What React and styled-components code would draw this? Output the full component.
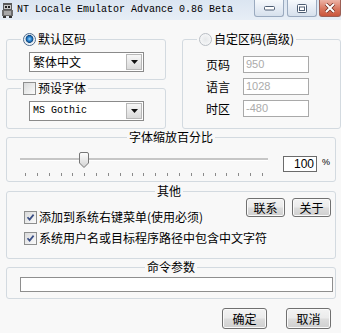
import React from "react";
import styled, { createGlobalStyle } from "styled-components";

const GlobalStyle = createGlobalStyle`
  * { box-sizing: border-box; }
  html, body {
    margin: 0;
    padding: 0;
    background: #f8f8f8;
  }
  body {
    font-family: "Noto Sans CJK SC", "Liberation Sans", sans-serif;
    font-size: 12px;
    line-height: 14px;
    color: #000;
  }
`;

const Window = styled.div`
  width: 341px;
  height: 333px;
  overflow: hidden;
  display: flex;
  flex-direction: column;
  background: #f8f8f8;
`;

const TitleBar = styled.div`
  height: 20px;
  flex: none;
  display: flex;
  align-items: flex-start;
  background: linear-gradient(#dbe5f1, #e7eef6);
`;

const AppIcon = styled.svg`
  width: 16px;
  height: 16px;
  margin-top: 2px;
  flex: none;
`;

const TitleText = styled.span`
  margin-left: 1px;
  font-family: "Liberation Mono", monospace;
  font-size: 10px;
  line-height: 20px;
  white-space: nowrap;
`;

const CaptionButtons = styled.div`
  margin-left: auto;
  display: flex;
`;

const CaptionButton = styled.div`
  width: ${(p) => p.$w}px;
  height: 17px;
  margin-left: ${(p) => p.$gap || 0}px;
  border: 1px solid ${(p) => (p.$close ? "#9c5f55" : "#9aaabf")};
  border-top: none;
  border-radius: 0 0 3px 3px;
  background: ${(p) =>
    p.$close
      ? "linear-gradient(#ecb3a6, #d9775f 55%, #c9553c)"
      : "linear-gradient(#f6f9fc, #e4ebf4 55%, #d6e0ec)"};
  display: flex;
  align-items: center;
  justify-content: center;
`;

const Body = styled.div`
  flex: 1;
  padding: 12px 0 0 6px;
  display: flex;
  flex-direction: column;
`;

const TopRow = styled.div`
  display: flex;
  gap: 16px;
`;

const Column = styled.div`
  display: flex;
  flex-direction: column;
`;

const Group = styled.fieldset`
  margin: ${(p) => p.$mt || 0}px 0 0 0;
  padding: ${(p) => p.$pad};
  width: ${(p) => p.$w}px;
  border: 1px solid #d3dae0;
  border-radius: 3px;
  min-width: 0;
`;

const Legend = styled.legend`
  padding: 0 2px;
  margin-left: ${(p) => (p.$center ? "auto" : `${p.$indent || 0}px`)};
  margin-right: ${(p) => (p.$center ? "auto" : "0")};
  height: 14px;
  line-height: 14px;
  display: flex;
  align-items: center;
  gap: 2px;
  white-space: nowrap;
`;

const Radio = styled.span`
  width: 13px;
  height: 13px;
  flex: none;
  border-radius: 50%;
  border: 1px solid ${(p) => (p.$checked ? "#4d6a8c" : "#b9bec4")};
  background: ${(p) =>
    p.$checked
      ? "radial-gradient(circle at 50% 45%, #9fd3f7 0, #2b86d2 2px, #0f467f 3.6px, #d9e2ea 4.2px, #ffffff 6px)"
      : "radial-gradient(circle, #e6e8ea 0, #f6f7f8 6px)"};
`;

const Check = styled.span`
  width: 13px;
  height: 13px;
  flex: none;
  border: 1px solid #8e8f8f;
  background: linear-gradient(135deg, #d9dadb, #fbfbfb);
  display: inline-flex;
  align-items: center;
  justify-content: center;
`;

const CheckMark = () => (
  <svg width="9" height="9" viewBox="0 0 9 9">
    <path d="M1.5 4.2 L3.6 6.6 L7.6 1.6" fill="none" stroke="#3b4f86" strokeWidth="1.7" />
  </svg>
);

const Combo = styled.div`
  margin-left: 22px;
  width: 115px;
  height: 20px;
  border: 1px solid #8a8a8a;
  background: #fff;
  display: flex;
`;

const ComboText = styled.span`
  flex: 1;
  padding-left: 3px;
  line-height: 18px;
  font-family: ${(p) => (p.$mono ? '"Liberation Mono", monospace' : "inherit")};
  font-size: ${(p) => (p.$mono ? "10px" : "12px")};
`;

const ComboArrow = styled.span`
  width: 16px;
  margin: 1px;
  border: 1px solid #b7b7b7;
  background: linear-gradient(#f7f7f7, #dadada);
  display: flex;
  align-items: center;
  justify-content: center;
`;

const Arrow = () => (
  <svg width="7" height="4" viewBox="0 0 7 4">
    <path d="M0 0 H7 L3.5 4 Z" fill="#111" />
  </svg>
);

const FieldRow = styled.div`
  display: flex;
  align-items: center;
  margin: ${(p) => p.$mt || 0}px 0 0 23px;
`;

const FieldLabel = styled.span`
  width: 37px;
  line-height: 17px;
`;

const NumField = styled.div`
  width: 66px;
  height: 17px;
  border: 1px solid #a9a9a9;
  background: #fff;
  color: #ababab;
  font-family: "Liberation Sans", sans-serif;
  font-size: 11px;
  line-height: 15px;
  padding-left: 2px;
`;

const SliderRow = styled.div`
  display: flex;
  align-items: flex-start;
`;

const SliderArea = styled.div`
  margin-left: 13px;
  width: 248px;
`;

const Track = styled.div`
  position: relative;
  height: 16px;
  &::before {
    content: "";
    position: absolute;
    left: 0;
    right: 0;
    top: 6px;
    height: 2px;
    background: #c6c6c6;
    border-bottom: 1px solid #ffffff;
  }
`;

const Thumb = styled.svg`
  position: absolute;
  left: 59px;
  top: 0;
  width: 10px;
  height: 16px;
`;

const Ticks = styled.div`
  margin-top: 5px;
  height: 3px;
  padding: 0 5px;
  display: flex;
  justify-content: space-between;
`;

const Tick = styled.span`
  width: 1px;
  height: 3px;
  background: #8a8a8a;
`;

const PercentBox = styled.div`
  margin: 4px 0 0 15px;
  width: 34px;
  height: 16px;
  border: 1px solid #6b6b6b;
  background: #fff;
  text-align: right;
  padding-right: 2px;
  font-family: "Liberation Sans", sans-serif;
  font-size: 12px;
  line-height: 14px;
`;

const PercentSign = styled.span`
  margin: 4px 0 0 5px;
  font-family: "Liberation Sans", sans-serif;
  font-size: 9px;
  line-height: 12px;
`;

const OptionRow = styled.div`
  display: flex;
  align-items: flex-start;
  margin-top: ${(p) => p.$mt || 0}px;
`;

const CheckLabel = styled.label`
  display: flex;
  align-items: center;
  gap: 2px;
  margin: ${(p) => p.$mt || 0}px 0 0 17px;
  line-height: 14px;
  white-space: nowrap;
`;

const ButtonGroup = styled.div`
  margin-left: auto;
  display: flex;
  gap: ${(p) => p.$gap}px;
`;

const PushButton = styled.button`
  width: ${(p) => p.$w}px;
  height: ${(p) => p.$h}px;
  padding: 0;
  border: 1px solid #707070;
  border-radius: 3px;
  box-shadow: inset 0 0 0 1px #fafafa;
  background: linear-gradient(#f3f3f3 0%, #ebebeb 48%, #dddddd 52%, #cfcfcf 100%);
  font-family: inherit;
  font-size: 12px;
  line-height: 14px;
  color: #000;
`;

const CommandInput = styled.div`
  margin-left: 13px;
  width: 313px;
  height: 15px;
  border: 1px solid #8e8e8e;
  background: #fff;
`;

const Footer = styled.div`
  margin-top: 9px;
  padding-right: 10px;
  display: flex;
  justify-content: flex-end;
  gap: 19px;
`;

export default function App() {
  return (
    <>
      <GlobalStyle />
      <Window>
        <TitleBar>
          <AppIcon viewBox="0 0 16 16">
            <rect x="3" y="1" width="9" height="7" fill="#5a5a5a" />
            <rect x="4" y="3" width="7" height="4" fill="#c9c9c9" />
            <rect x="5" y="4" width="2" height="2" fill="#222" />
            <rect x="8" y="4" width="2" height="2" fill="#222" />
            <rect x="2" y="8" width="11" height="6" fill="#6d6d6d" />
            <rect x="4" y="9" width="7" height="4" fill="#a8a8a8" />
            <rect x="3" y="14" width="3" height="2" fill="#333" />
            <rect x="9" y="14" width="3" height="2" fill="#333" />
          </AppIcon>
          <TitleText>NT Locale Emulator Advance 0.86 Beta</TitleText>
          <CaptionButtons>
            <CaptionButton $w={30}>
              <svg width="11" height="6" viewBox="0 0 11 6">
                <rect x="0.5" y="1.5" width="10" height="3.5" rx="1" fill="#fff" stroke="#4c5d73" />
              </svg>
            </CaptionButton>
            <CaptionButton $w={30} $gap={3}>
              <svg width="10" height="9" viewBox="0 0 10 9">
                <rect x="0.5" y="0.5" width="9" height="8" rx="1" fill="#fff" stroke="#4c5d73" />
                <rect x="2.5" y="3" width="5" height="3.5" fill="none" stroke="#4c5d73" />
              </svg>
            </CaptionButton>
            <CaptionButton $w={22} $gap={2} $close>
              <svg width="12" height="10" viewBox="0 0 12 10">
                <path d="M2 1 L10 9 M10 1 L2 9" stroke="#6b2b20" strokeWidth="3.4" />
                <path d="M2 1 L10 9 M10 1 L2 9" stroke="#ffffff" strokeWidth="2" />
              </svg>
            </CaptionButton>
          </CaptionButtons>
        </TitleBar>

        <Body>
          <TopRow>
            <Column>
              <Group $w={160} $pad="6px 0 7px 0">
                <Legend $indent={14}>
                  <Radio $checked />
                  <span>默认区码</span>
                </Legend>
                <Combo>
                  <ComboText>繁体中文</ComboText>
                  <ComboArrow>
                    <Arrow />
                  </ComboArrow>
                </Combo>
              </Group>
              <Group $w={160} $mt={1} $pad="6px 0 7px 0">
                <Legend $indent={14}>
                  <Check />
                  <span>预设字体</span>
                </Legend>
                <Combo>
                  <ComboText $mono>MS Gothic</ComboText>
                  <ComboArrow>
                    <Arrow />
                  </ComboArrow>
                </Combo>
              </Group>
            </Column>

            <Group $w={159} $pad="10px 0 11px 0">
              <Legend $indent={14}>
                <Radio />
                <span>自定区码(高级)</span>
              </Legend>
              <FieldRow>
                <FieldLabel>页码</FieldLabel>
                <NumField>950</NumField>
              </FieldRow>
              <FieldRow $mt={5}>
                <FieldLabel>语言</FieldLabel>
                <NumField>1028</NumField>
              </FieldRow>
              <FieldRow $mt={5}>
                <FieldLabel>时区</FieldLabel>
                <NumField>-480</NumField>
              </FieldRow>
            </Group>
          </TopRow>

          <Group $w={330} $mt={1} $pad="8px 0 5px 0">
            <Legend $center>字体缩放百分比</Legend>
            <SliderRow>
              <SliderArea>
                <Track>
                  <Thumb viewBox="0 0 10 16">
                    <defs>
                      <linearGradient id="thumbFill" x1="0" y1="0" x2="0" y2="1">
                        <stop offset="0" stopColor="#ffffff" />
                        <stop offset="1" stopColor="#d2d2d2" />
                      </linearGradient>
                    </defs>
                    <path
                      d="M0.5 2 Q0.5 0.5 2 0.5 H8 Q9.5 0.5 9.5 2 V11 L5 15.5 L0.5 11 Z"
                      fill="url(#thumbFill)"
                      stroke="#777"
                    />
                  </Thumb>
                </Track>
                <Ticks>
                  {Array.from({ length: 21 }, (_, i) => (
                    <Tick key={i} />
                  ))}
                </Ticks>
              </SliderArea>
              <PercentBox>100</PercentBox>
              <PercentSign>%</PercentSign>
            </SliderRow>
          </Group>

          <Group $w={330} $mt={2} $pad="0 4px 13px 0">
            <Legend $center>其他</Legend>
            <OptionRow>
              <CheckLabel $mt={12}>
                <Check>
                  <CheckMark />
                </Check>
                <span>添加到系统右键菜单(使用必须)</span>
              </CheckLabel>
              <ButtonGroup $gap={7}>
                <PushButton $w={39} $h={19}>联系</PushButton>
                <PushButton $w={39} $h={19}>关于</PushButton>
              </ButtonGroup>
            </OptionRow>
            <OptionRow $mt={7}>
              <CheckLabel>
                <Check>
                  <CheckMark />
                </Check>
                <span>系统用户名或目标程序路径中包含中文字符</span>
              </CheckLabel>
            </OptionRow>
          </Group>

          <Group $w={330} $mt={1} $pad="3px 0 6px 0">
            <Legend $center>命令参数</Legend>
            <CommandInput />
          </Group>

          <Footer>
            <PushButton $w={45} $h={21}>确定</PushButton>
            <PushButton $w={45} $h={21}>取消</PushButton>
          </Footer>
        </Body>
      </Window>
    </>
  );
}
